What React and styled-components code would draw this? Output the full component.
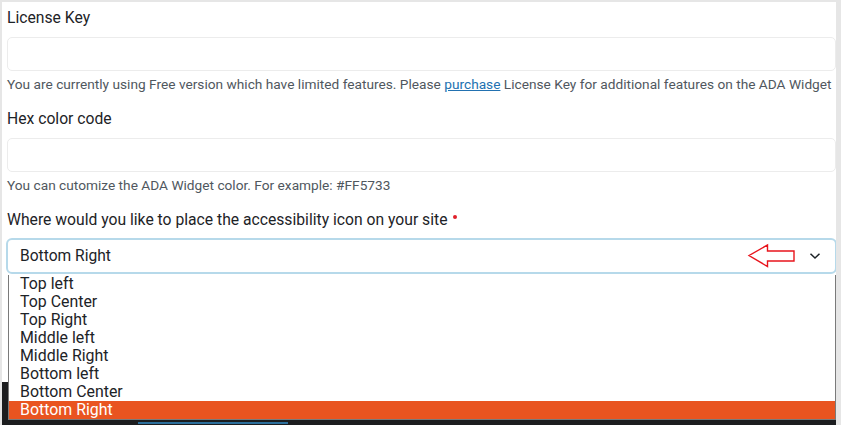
import React from 'react';
import styled, { createGlobalStyle } from 'styled-components';

const GlobalStyle = createGlobalStyle`
  html, body {
    margin: 0;
    padding: 0;
    background: #fff;
  }
  body {
    font-family: Roboto, "Liberation Sans", Arial, sans-serif;
  }
`;

const Frame = styled.div`
  position: relative;
  width: 841px;
  height: 425px;
  box-sizing: border-box;
  overflow: hidden;
  background: #fff;
  border-top: 2px solid #e6e6e6;
  border-left: 2px solid #e6e6e6;
  border-right: 5px solid #e6e6e6;
`;

const Form = styled.div`
  display: flex;
  flex-direction: column;
  padding: 6px 0 0 5px;
  width: 829px;
`;

const Label = styled.div`
  font-size: 15.7px;
  line-height: 20px;
  height: 20px;
  color: #1d2327;
  margin-top: ${props => props.first ? 0 : 16}px;
`;

const Required = styled.span`
  display: inline-block;
  width: 4px;
  height: 4px;
  margin-left: 6px;
  border-radius: 50%;
  background: #e0202a;
  vertical-align: 6px;
`;

const TextInput = styled.div`
  height: 34px;
  margin-top: 9px;
  box-sizing: border-box;
  border: 1px solid #ececec;
  border-radius: 5px;
  background: #fff;
`;

const Help = styled.div`
  font-size: 13.7px;
  line-height: 18px;
  height: 18px;
  color: #50575e;
  margin-top: 4px;
  white-space: nowrap;
`;

const Link = styled.a`
  color: #2271b1;
  text-decoration: underline;
`;

const SelectWrap = styled.div`
  position: relative;
  margin-top: 8px;
  z-index: 2;
`;

const SelectBox = styled.div`
  height: 36px;
  box-sizing: border-box;
  margin-left: -1px;
  margin-right: -1px;
  border: 2px solid #b6d9ea;
  border-radius: 6px;
  background: #fff;
  display: flex;
  align-items: center;
  padding: 0 14px 0 12px;
  font-size: 15.6px;
  color: #1d2327;
`;

const Value = styled.span`
  flex: 1;
`;

const Hint = styled.svg`
  margin-right: 12px;
`;

const Options = styled.ul`
  position: absolute;
  top: 100%;
  left: 1px;
  right: 0;
  margin: 1px 0 0;
  padding: 0;
  list-style: none;
  background: #fff;
  border: 1px solid #7a7a7a;
  border-top: none;
`;

const Option = styled.li`
  height: 18px;
  line-height: 18px;
  font-size: 15.9px;
  padding-left: 11px;
  color: ${props => props.selected ? '#fff' : '#1d2327'};
  background: ${props => props.selected ? '#e95420' : 'transparent'};
`;

const DarkBar = styled.div`
  position: relative;
  margin-top: 108px;
  margin-left: -7px;
  width: 841px;
  height: 44px;
  background: #1c1d1f;
`;

const BlueLine = styled.div`
  position: absolute;
  left: 138px;
  bottom: 2px;
  width: 150px;
  height: 2px;
  background: #2c6f9c;
`;

const options = [
  'Top left',
  'Top Center',
  'Top Right',
  'Middle left',
  'Middle Right',
  'Bottom left',
  'Bottom Center',
  'Bottom Right',
];

export default function App() {
  return (
    <>
      <GlobalStyle />
      <Frame>
        <Form>
          <Label first>License Key</Label>
          <TextInput />
          <Help>
            You are currently using Free version which have limited features. Please{' '}
            <Link href="#">purchase</Link> License Key for additional features on the ADA Widget
          </Help>

          <Label>Hex color code</Label>
          <TextInput />
          <Help>You can cutomize the ADA Widget color. For example: #FF5733</Help>

          <Label>
            Where would you like to place the accessibility icon on your site
            <Required />
          </Label>
          <SelectWrap>
            <SelectBox>
              <Value>Bottom Right</Value>
              <Hint width="50" height="26" viewBox="0 0 50 26">
                <path
                  d="M2 12.5 L20.5 2 L20.5 8 L47 8 L47 18 L20.5 18 L20.5 23.5 Z"
                  fill="none"
                  stroke="#e8141c"
                  strokeWidth="1.4"
                  strokeLinejoin="miter"
                />
              </Hint>
              <svg width="12" height="8" viewBox="0 0 12 8">
                <path d="M1.5 1.8 L6 6 L10.5 1.8" fill="none" stroke="#1d2327" strokeWidth="1.5" />
              </svg>
            </SelectBox>
            <Options>
              {options.map(o => (
                <Option key={o} selected={o === 'Bottom Right'}>{o}</Option>
              ))}
            </Options>
          </SelectWrap>
          <DarkBar>
            <BlueLine />
          </DarkBar>
        </Form>
      </Frame>
    </>
  );
}
